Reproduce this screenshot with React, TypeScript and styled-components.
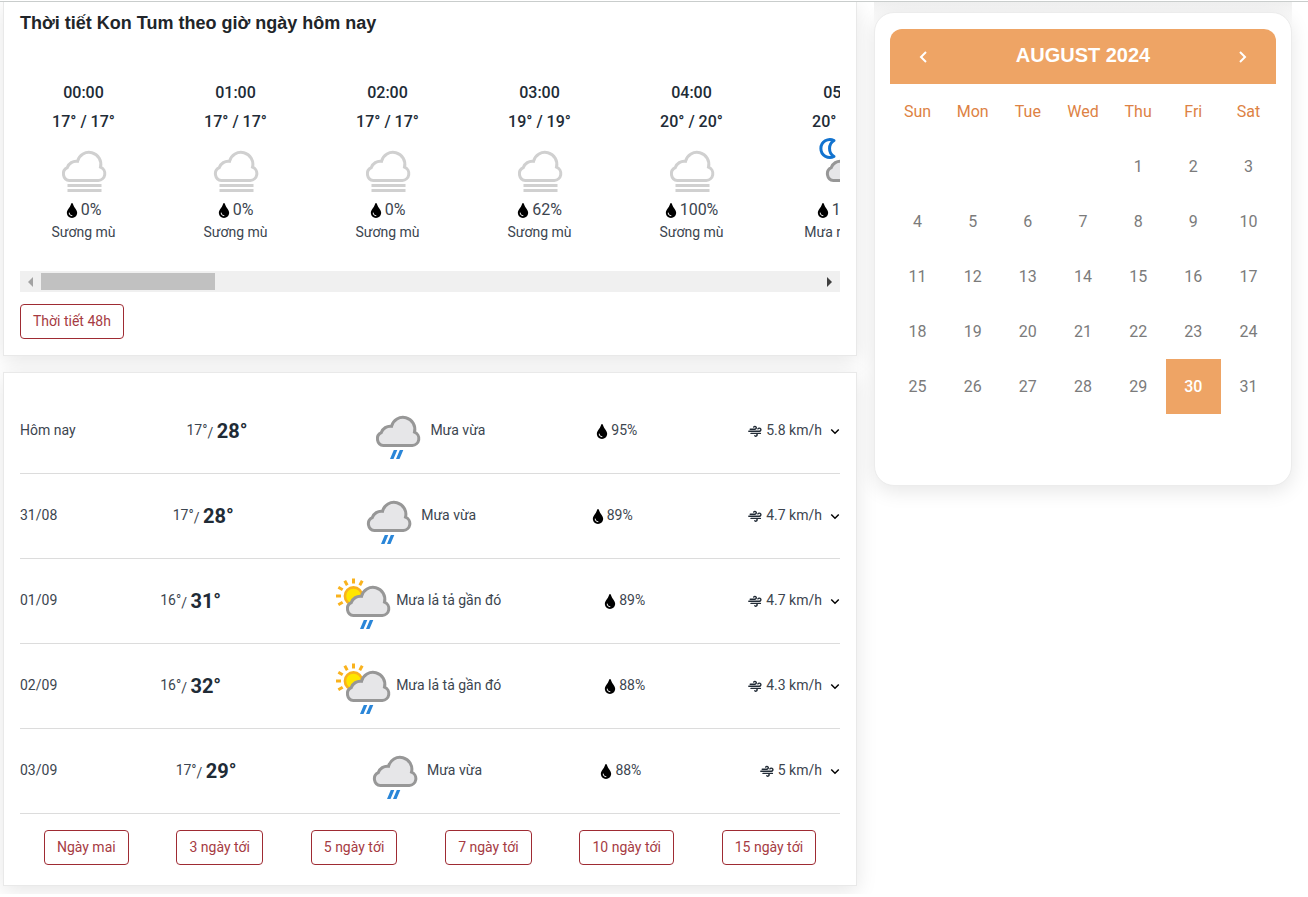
import React, { useRef, useState } from 'react';
import styled, { createGlobalStyle } from 'styled-components';
import { FaTint } from 'react-icons/fa';
import { BiChevronDown, BiChevronLeft, BiChevronRight } from 'react-icons/bi';

const GlobalStyle = createGlobalStyle`
  *, *::before, *::after { box-sizing: border-box; }
  body {
    margin: 0;
    background: #fff;
    color: #3c454f;
    font-family: Roboto, "Noto Sans", sans-serif;
    font-size: 14px;
    line-height: 20px;
  }
  h2, p, ul { margin: 0; padding: 0; }
  ul { list-style: none; }
  button { font: inherit; color: inherit; cursor: pointer; }
`;

const Page = styled.div`
  display: grid;
  grid-template-columns: minmax(0, 1fr) 418px;
  gap: 17px;
  align-items: start;
  margin-top: 1px;
  padding: 0 16px 8px 3px;
  border-top: 1px solid #c9cdcc;
  overflow: hidden;
`;

const Main = styled.main`
  display: flex;
  flex-direction: column;
  gap: 16px;
  min-width: 0;
`;

const Card = styled.section`
  background: #fff;
  border: 1px solid #e9e9e9;
  box-shadow: 0 5px 20px rgba(0, 0, 0, 0.1);
  padding: 16px;
`;

const HourlyCard = styled(Card)`
  border-top: 0;
  padding-top: 8px;
`;

const Title = styled.h2`
  font-family: "Liberation Sans", Arial, sans-serif;
  font-size: 18px;
  line-height: 26px;
  font-weight: 700;
  color: #212529;
`;

const HourStrip = styled.ul`
  display: flex;
  gap: 25px;
  margin-top: 43px;
  height: 192px;
  overflow: hidden;
`;

const Hour = styled.li`
  flex: 0 0 127px;
  display: flex;
  flex-direction: column;
  align-items: center;
  white-space: nowrap;
`;

const HourHead = styled.div`
  display: flex;
  flex-direction: column;
  align-items: center;
  gap: 2px;
  font-size: 16px;
  line-height: 27px;
  font-weight: 500;
  color: #212b36;
`;

const HourIcon = styled.div`
  height: 64px;
  margin-bottom: 1px;
`;

const Chance = styled.p`
  display: flex;
  align-items: center;
  gap: 3px;
  font-size: 16px;
  line-height: 20px;
`;

const Sky = styled.p`
  line-height: 24px;
`;

const Drop = styled(FaTint)`
  color: #000;
  width: 12px;
  height: 15px;
  margin-top: 1px;
`;

const ScrollBar = styled.div`
  display: flex;
  height: 21px;
  padding: 2px 0;
  background: #f0f0f0;
`;

const ScrollArrow = styled.button<{ $dim?: boolean }>`
  flex: 0 0 21px;
  display: grid;
  place-items: center;
  padding: 0;
  border: 0;
  background: none;
  color: ${(p) => (p.$dim ? '#a3a3a3' : '#404040')};
`;

const ScrollTrack = styled.div`
  flex: 1;
`;

const ScrollThumb = styled.div`
  width: 174px;
  height: 17px;
  background: #c1c1c1;
`;

const OutlineButton = styled.button`
  height: 35px;
  padding: 0 12px;
  border: 1px solid #9f2b33;
  border-radius: 4px;
  background: #fff;
  color: #a63b43;
  line-height: 21px;
`;

const MoreHours = styled(OutlineButton)`
  display: block;
  margin-top: 12px;
`;

const DailyCard = styled(Card)`
  padding-bottom: 20px;
`;

const DayItem = styled.li`
  border-bottom: 1px solid #dcdcdc;
`;

const DayButton = styled.button`
  display: flex;
  align-items: center;
  justify-content: space-between;
  width: 100%;
  height: 84px;
  padding: 0;
  border: 0;
  background: none;
  text-align: left;
`;

const Label = styled.span`
  padding-bottom: 2px;
  white-space: nowrap;
`;

const Temps = styled.span`
  display: flex;
  align-items: center;
`;

const High = styled.span`
  padding-top: 2px;
  line-height: 24px;
  b {
    font-size: 20px;
    font-weight: 700;
    color: #212b36;
  }
`;

const Condition = styled.span`
  display: flex;
  align-items: center;
  padding-left: 8px;
  svg {
    margin-top: 2px;
  }
`;

const Humidity = styled.span`
  display: flex;
  align-items: center;
  gap: 3px;
`;

const Wind = styled.span`
  display: flex;
  align-items: center;
  gap: 4px;
`;

const Chevron = styled(BiChevronDown)<{ $open: boolean }>`
  width: 18px;
  height: 18px;
  color: #000;
  margin-right: -4px;
  rotate: ${(p) => (p.$open ? '180deg' : '0deg')};
`;

const Ranges = styled.nav`
  display: flex;
  justify-content: space-around;
  margin-top: 16px;
`;

const Sidebar = styled.aside`
  padding-top: 10px;
  background: linear-gradient(#f0f0f0, #f7f7f7 10px, #fff 24px);
`;

const CalendarCard = styled.section`
  padding: 16px 15px;
  background: #fff;
  border: 1px solid #ececec;
  border-radius: 20px;
  box-shadow: 0 5px 20px rgba(0, 0, 0, 0.1);
`;

const CalendarHead = styled.header`
  display: flex;
  align-items: center;
  justify-content: space-between;
  height: 55px;
  padding: 0 22px;
  border-radius: 12px 12px 0 0;
  background: #eea465;
  color: #fff;
`;

const Month = styled.h2`
  padding-bottom: 4px;
  font-family: "Liberation Sans", Arial, sans-serif;
  font-size: 20px;
  line-height: 28px;
  font-weight: 700;
`;

const NavButton = styled.button`
  display: flex;
  padding: 0;
  border: 0;
  background: none;
`;

const MonthTable = styled.table`
  width: 100%;
  table-layout: fixed;
  border-collapse: collapse;
  font-size: 16px;
  text-align: center;
`;

const WeekDay = styled.th`
  height: 55px;
  padding: 0;
  font-weight: 400;
  color: #dd8244;
`;

const DateCell = styled.td<{ $today: boolean }>`
  height: 55px;
  padding: 0;
  color: ${(p) => (p.$today ? '#fff' : '#7b7b7b')};
  background: ${(p) => (p.$today ? '#eea465' : 'none')};
  font-weight: ${(p) => (p.$today ? 500 : 400)};
`;

type Kind = 'fog' | 'rain' | 'sunRain' | 'moonRain';

const CLOUD =
  'M8 28.5H36.8A6.9 6.9 0 0 0 39 15.2A11.6 11.6 0 0 0 16 9.3A9.4 9.4 0 0 0 5.8 15.6A6.8 6.8 0 0 0 8 28.5Z';

function WeatherIcon({ kind }: { kind: Kind }) {
  const shifted = kind === 'sunRain' || kind === 'moonRain';
  const x = shifted ? 13.5 : 9.5;
  return (
    <svg width="64" height="64" viewBox="0 0 64 64" aria-hidden="true">
      {kind === 'sunRain' && (
        <g stroke="#f9b21d" strokeWidth="3">
          <circle cx="21.5" cy="26" r="8.6" fill="#ffe600" strokeWidth="2.6" />
          {[-120, -90, -60, -30, 0, 30].map((a) => (
            <path key={a} d="M0 -12.5V-17.5" transform={`translate(21.5 26) rotate(${a})`} />
          ))}
        </g>
      )}
      {kind === 'moonRain' && (
        <path
          d="M22 5.5A9 9 0 1 0 22 21.5A9.4 9.4 0 0 1 22 5.5Z"
          fill="#fff"
          stroke="#1273cf"
          strokeWidth="3"
          strokeLinejoin="round"
        />
      )}
      <path
        d={CLOUD}
        transform={`translate(${x} 17)`}
        fill={kind === 'fog' ? '#fff' : '#e6e6e8'}
        stroke={kind === 'fog' ? '#d0d0d0' : '#979797'}
        strokeWidth="3"
      />
      {kind === 'fog' ? (
        <path d="M15.5 50.5H49.5M15.5 55.5H49.5" stroke="#d0d0d0" strokeWidth="3" />
      ) : (
        <path
          d="M18.3 33H21.8L18 42H14.5ZM24.3 33H27.8L24 42H20.5Z"
          transform={`translate(${x} 17)`}
          fill="#2a86d8"
        />
      )}
    </svg>
  );
}

function WindIcon() {
  return (
    <svg width="14" height="14" viewBox="0 0 14 14" fill="none" stroke="#212b36" strokeWidth="1.4" strokeLinecap="round" aria-hidden="true">
      <path d="M2.2 5.2H7A1.4 1.4 0 1 0 5.7 3.1" />
      <path d="M0.8 7.3H11.4A1.6 1.6 0 1 0 9.9 4.9" />
      <path d="M3 9.4H12.4M5.4 9.4H8A1.4 1.4 0 1 1 6.8 11.8" />
    </svg>
  );
}

const hours: { time: string; temp: string; chance: string; sky: string; kind: Kind }[] = [
  { time: '00:00', temp: '17° / 17°', chance: '0%', sky: 'Sương mù', kind: 'fog' },
  { time: '01:00', temp: '17° / 17°', chance: '0%', sky: 'Sương mù', kind: 'fog' },
  { time: '02:00', temp: '17° / 17°', chance: '0%', sky: 'Sương mù', kind: 'fog' },
  { time: '03:00', temp: '19° / 19°', chance: '62%', sky: 'Sương mù', kind: 'fog' },
  { time: '04:00', temp: '20° / 20°', chance: '100%', sky: 'Sương mù', kind: 'fog' },
  { time: '05:00', temp: '20° / 20°', chance: '100%', sky: 'Mưa rào nhẹ', kind: 'moonRain' },
];

const days: { day: string; low: string; high: string; sky: string; kind: Kind; humidity: string; wind: string }[] = [
  { day: 'Hôm nay', low: '17°', high: '28°', sky: 'Mưa vừa', kind: 'rain', humidity: '95%', wind: '5.8 km/h' },
  { day: '31/08', low: '17°', high: '28°', sky: 'Mưa vừa', kind: 'rain', humidity: '89%', wind: '4.7 km/h' },
  { day: '01/09', low: '16°', high: '31°', sky: 'Mưa lả tả gần đó', kind: 'sunRain', humidity: '89%', wind: '4.7 km/h' },
  { day: '02/09', low: '16°', high: '32°', sky: 'Mưa lả tả gần đó', kind: 'sunRain', humidity: '88%', wind: '4.3 km/h' },
  { day: '03/09', low: '17°', high: '29°', sky: 'Mưa vừa', kind: 'rain', humidity: '88%', wind: '5 km/h' },
];

const ranges = ['Ngày mai', '3 ngày tới', '5 ngày tới', '7 ngày tới', '10 ngày tới', '15 ngày tới'];
const weekDays = ['Sun', 'Mon', 'Tue', 'Wed', 'Thu', 'Fri', 'Sat'];
const FIRST_WEEKDAY = 4;
const DAYS_IN_MONTH = 31;
const TODAY = 30;

function Hourly() {
  const strip = useRef<HTMLUListElement>(null);
  const scroll = (by: number) => strip.current?.scrollBy({ left: by, behavior: 'smooth' });
  return (
    <HourlyCard>
      <Title>Thời tiết Kon Tum theo giờ ngày hôm nay</Title>
      <HourStrip ref={strip}>
        {hours.map((h) => (
          <Hour key={h.time}>
            <HourHead>
              <p>{h.time}</p>
              <p>{h.temp}</p>
            </HourHead>
            <HourIcon>
              <WeatherIcon kind={h.kind} />
            </HourIcon>
            <Chance>
              <Drop />
              {h.chance}
            </Chance>
            <Sky>{h.sky}</Sky>
          </Hour>
        ))}
      </HourStrip>
      <ScrollBar>
        <ScrollArrow $dim aria-label="Giờ trước" onClick={() => scroll(-152)}>
          <svg width="5" height="10" viewBox="0 0 5 10"><path d="M5 0V10L0 5Z" fill="currentColor" /></svg>
        </ScrollArrow>
        <ScrollTrack>
          <ScrollThumb />
        </ScrollTrack>
        <ScrollArrow aria-label="Giờ sau" onClick={() => scroll(152)}>
          <svg width="5" height="10" viewBox="0 0 5 10"><path d="M0 0V10L5 5Z" fill="currentColor" /></svg>
        </ScrollArrow>
      </ScrollBar>
      <MoreHours>Thời tiết 48h</MoreHours>
    </HourlyCard>
  );
}

function Daily() {
  const [open, setOpen] = useState<string | null>(null);
  return (
    <DailyCard>
      <ul>
        {days.map((d) => (
          <DayItem key={d.day}>
            <DayButton aria-expanded={open === d.day} onClick={() => setOpen(open === d.day ? null : d.day)}>
              <Label>{d.day}</Label>
              <Temps>
                <Label>{d.low}</Label>
                <High>
                  / <b>{d.high}</b>
                </High>
              </Temps>
              <Condition>
                <WeatherIcon kind={d.kind} />
                <Label>{d.sky}</Label>
              </Condition>
              <Humidity>
                <Drop />
                <Label>{d.humidity}</Label>
              </Humidity>
              <Wind>
                <WindIcon />
                <Label>{d.wind}</Label>
                <Chevron $open={open === d.day} />
              </Wind>
            </DayButton>
          </DayItem>
        ))}
      </ul>
      <Ranges>
        {ranges.map((r) => (
          <OutlineButton key={r}>{r}</OutlineButton>
        ))}
      </Ranges>
    </DailyCard>
  );
}

function Calendar() {
  const weeks = Array.from({ length: 6 }, (_, w) =>
    weekDays.map((_, d) => {
      const n = w * 7 + d - FIRST_WEEKDAY + 1;
      return n >= 1 && n <= DAYS_IN_MONTH ? n : null;
    }),
  );
  return (
    <CalendarCard>
      <CalendarHead>
        <NavButton aria-label="Previous month">
          <BiChevronLeft size={24} />
        </NavButton>
        <Month>AUGUST 2024</Month>
        <NavButton aria-label="Next month">
          <BiChevronRight size={24} />
        </NavButton>
      </CalendarHead>
      <MonthTable>
        <thead>
          <tr>
            {weekDays.map((d) => (
              <WeekDay key={d} scope="col">{d}</WeekDay>
            ))}
          </tr>
        </thead>
        <tbody>
          {weeks.map((week, w) => (
            <tr key={w}>
              {week.map((n, d) => (
                <DateCell key={d} $today={n === TODAY}>{n}</DateCell>
              ))}
            </tr>
          ))}
        </tbody>
      </MonthTable>
    </CalendarCard>
  );
}

export default function App() {
  return (
    <>
      <GlobalStyle />
      <Page>
        <Main>
          <Hourly />
          <Daily />
        </Main>
        <Sidebar>
          <Calendar />
        </Sidebar>
      </Page>
    </>
  );
}
